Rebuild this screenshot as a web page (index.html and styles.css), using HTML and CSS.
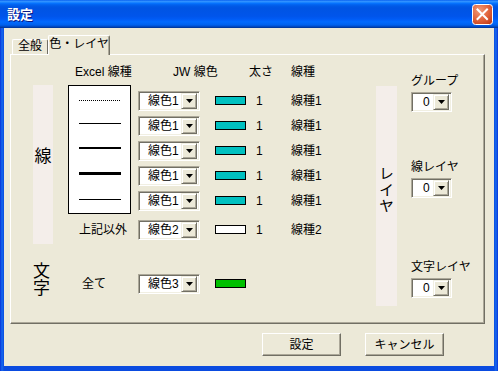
FILE: index.html
```html
<!DOCTYPE html>
<html lang="ja">
<head>
<meta charset="utf-8">
<title>設定</title>
<link rel="stylesheet" href="styles.css">
</head>
<body>
<div class="window">
  <div class="titlebar">
    <span class="title">設定</span>
    <span class="close">
      <svg width="21" height="21" viewBox="0 0 21 21">
        <defs>
          <radialGradient id="cg" cx="35%" cy="30%" r="85%">
            <stop offset="0" stop-color="#F29A78"/>
            <stop offset="0.55" stop-color="#E1643C"/>
            <stop offset="1" stop-color="#BF3A17"/>
          </radialGradient>
        </defs>
        <rect x="0.5" y="0.5" width="20" height="20" rx="3" fill="url(#cg)" stroke="#fff"/>
        <path d="M5.5 5.5L15 15M15 5.5L5.5 15" stroke="#fff" stroke-width="2" stroke-linecap="square"/>
      </svg>
    </span>
  </div>
  <div class="client">
    <div class="tabs">
      <div class="tab">全般</div>
      <div class="tab active">色・レイヤ</div>
    </div>
    <div class="panel">
      <div class="grid">
        <div class="h-excel">Excel 線種</div>
        <div class="h-jw">JW 線色</div>
        <div class="h-thick">太さ</div>
        <div class="h-type">線種</div>

        <div class="band-left"><span class="vtext big">線</span></div>
        <div class="linebox">
          <div class="ln dotted"></div>
          <div class="ln thin l2"></div>
          <div class="ln w2 l3"></div>
          <div class="ln w3 l4"></div>
          <div class="ln thin l5"></div>
        </div>

        <div class="combo c-combo r2"><span class="val">線色1</span><span class="arrow"><svg width="7" height="4" viewBox="0 0 7 4"><polygon points="0,0 7,0 3.5,4" fill="#000"/></svg></span></div>
        <div class="swatch teal r2"></div><div class="c-thick r2">1</div><div class="c-type r2">線種1</div>

        <div class="combo c-combo r3"><span class="val">線色1</span><span class="arrow"><svg width="7" height="4" viewBox="0 0 7 4"><polygon points="0,0 7,0 3.5,4" fill="#000"/></svg></span></div>
        <div class="swatch teal r3"></div><div class="c-thick r3">1</div><div class="c-type r3">線種1</div>

        <div class="combo c-combo r4"><span class="val">線色1</span><span class="arrow"><svg width="7" height="4" viewBox="0 0 7 4"><polygon points="0,0 7,0 3.5,4" fill="#000"/></svg></span></div>
        <div class="swatch teal r4"></div><div class="c-thick r4">1</div><div class="c-type r4">線種1</div>

        <div class="combo c-combo r5"><span class="val">線色1</span><span class="arrow"><svg width="7" height="4" viewBox="0 0 7 4"><polygon points="0,0 7,0 3.5,4" fill="#000"/></svg></span></div>
        <div class="swatch teal r5"></div><div class="c-thick r5">1</div><div class="c-type r5">線種1</div>

        <div class="combo c-combo r6"><span class="val">線色1</span><span class="arrow"><svg width="7" height="4" viewBox="0 0 7 4"><polygon points="0,0 7,0 3.5,4" fill="#000"/></svg></span></div>
        <div class="swatch teal r6"></div><div class="c-thick r6">1</div><div class="c-type r6">線種1</div>

        <div class="c-label lbl-other r8">上記以外</div>
        <div class="combo c-combo r8"><span class="val">線色2</span><span class="arrow"><svg width="7" height="4" viewBox="0 0 7 4"><polygon points="0,0 7,0 3.5,4" fill="#000"/></svg></span></div>
        <div class="swatch white r8"></div><div class="c-thick r8">1</div><div class="c-type r8">線種2</div>

        <div class="moji r10"><span class="vtext big">文字</span></div>
        <div class="c-label lbl-all r10">全て</div>
        <div class="combo c-combo r10"><span class="val">線色3</span><span class="arrow"><svg width="7" height="4" viewBox="0 0 7 4"><polygon points="0,0 7,0 3.5,4" fill="#000"/></svg></span></div>
        <div class="swatch green r10"></div>
      </div>

      <div class="band-right"><span class="vtext mid">レイヤ</span></div>

      <div class="layers">
        <div class="lgroup g1">
          <div class="llabel">グループ</div>
          <div class="combo small"><span class="val">0</span><span class="arrow"><svg width="7" height="4" viewBox="0 0 7 4"><polygon points="0,0 7,0 3.5,4" fill="#000"/></svg></span></div>
        </div>
        <div class="lgroup g2">
          <div class="llabel">線レイヤ</div>
          <div class="combo small"><span class="val">0</span><span class="arrow"><svg width="7" height="4" viewBox="0 0 7 4"><polygon points="0,0 7,0 3.5,4" fill="#000"/></svg></span></div>
        </div>
        <div class="lgroup g3">
          <div class="llabel">文字レイヤ</div>
          <div class="combo small"><span class="val">0</span><span class="arrow"><svg width="7" height="4" viewBox="0 0 7 4"><polygon points="0,0 7,0 3.5,4" fill="#000"/></svg></span></div>
        </div>
      </div>
    </div>
    <div class="buttons">
      <div class="btn">設定</div>
      <div class="btn">キャンセル</div>
    </div>
  </div>
</div>
</body>
</html>
```

FILE: styles.css
```css
* { box-sizing: border-box; }
html, body {
  margin: 0;
  padding: 0;
  width: 498px;
  height: 371px;
  overflow: hidden;
  background: #0A3FD9;
}
body {
  font-family: "Liberation Sans", "Noto Sans CJK JP", sans-serif;
  font-size: 12px;
  line-height: 14px;
  color: #000;
}
.window {
  width: 498px;
  height: 371px;
  display: flex;
  flex-direction: column;
  background: linear-gradient(90deg, #0831D9 0, #166AEE 2px, #0A4BE0 4px, #0A4BE0 494px, #166AEE 496px, #0831D9 498px);
  padding: 0 4px 5px 4px;
}
.titlebar {
  height: 28px;
  margin: 0 -4px;
  padding: 0 5px 0 7px;
  display: flex;
  align-items: center;
  justify-content: space-between;
  background: linear-gradient(#0058EE 0%, #3593FF 4%, #288EFF 7%, #127DFF 10%, #036FFC 13%, #0262EE 17%, #0057E5 24%, #0054E3 30%, #0055EB 58%, #005BF5 68%, #026AFE 78%, #0062EF 88%, #0052D6 93%, #0040AB 97%, #003092 100%);
}
.title {
  color: #fff;
  font-family: "Noto Sans CJK JP", sans-serif;
  font-weight: bold;
  font-size: 13px;
  line-height: 15px;
  text-shadow: 1px 1px 0 #0A1883;
  margin-top: -1px;
}
.close {
  display: block;
  width: 21px;
  height: 21px;
  margin-top: 0;
}
.close svg { display: block; }
.client {
  flex: 1;
  background: #ECE9D8;
  padding: 6px 9px 0 6px;
  display: flex;
  flex-direction: column;
}
.tabs {
  display: flex;
  align-items: flex-end;
  height: 20px;
  padding-left: 2px;
  position: relative;
  z-index: 2;
}
.tab {
  height: 15px;
  width: 36px;
  border-top: 1px solid #fff;
  border-left: 1px solid #fff;
  border-right: 1px solid #716F64;
  border-radius: 2px 2px 0 0;
  text-align: center;
  font-size: 12px;
  line-height: 13px;
  margin-bottom: 0;
}
.tab.active {
  height: 20px;
  width: 62px;
  background: #ECE9D8;
  margin-bottom: -1px;
  line-height: 14px;
  padding-top: 1px;
  box-shadow: inset -1px 0 0 #ACA899;
}
.panel {
  width: 475px;
  height: 270px;
  border-top: 1px solid #fff;
  border-left: 1px solid #fff;
  border-right: 1px solid #716F64;
  border-bottom: 1px solid #716F64;
  box-shadow: inset -1px -1px 0 #ACA899;
  display: flex;
  align-items: flex-start;
  padding: 9px 0 0 22px;
  position: relative;
  z-index: 1;
}
.grid {
  display: grid;
  grid-template-columns: 20px 15px 63px 7px 62px 15px 31px 10px 20px 15px 40px;
  grid-template-rows: 24px repeat(5, 25px) 4px 25px 20px 44px;
  align-items: center;
  justify-items: start;
  white-space: nowrap;
}
.h-excel, .h-jw, .h-thick, .h-type {
  grid-row: 1;
  align-self: start;
  margin-top: 1px;
}
.h-excel { grid-column: 3 / span 3; margin-left: 7px; }
.h-jw { grid-column: 5 / span 3; margin-left: 35px; }
.h-thick { grid-column: 8 / span 2; margin-left: 3px; }
.h-type { grid-column: 11; }

.r2 { grid-row: 2; }
.r3 { grid-row: 3; }
.r4 { grid-row: 4; }
.r5 { grid-row: 5; }
.r6 { grid-row: 6; }
.r8 { grid-row: 8; }
.r10 { grid-row: 10; }

.band-left {
  grid-column: 1;
  grid-row: 2 / 9;
  align-self: stretch;
  justify-self: stretch;
  margin: -3px 0 -2px 0;
  background: #F4EEEA;
  display: flex;
  justify-content: center;
  padding-top: 62px;
}
.vtext {
  writing-mode: vertical-rl;
  font-family: "Noto Sans CJK JP", sans-serif;
}
.vtext.big { font-size: 17px; line-height: 17px; }
.vtext.mid { font-size: 15px; line-height: 15px; letter-spacing: 1px; }
.moji {
  grid-column: 1;
  align-self: start;
  justify-self: start;
}
.linebox {
  grid-column: 3;
  grid-row: 2 / 7;
  align-self: stretch;
  justify-self: stretch;
  margin: -3px 0 -1px 0;
  background: #fff;
  border: 1px solid #000;
  display: flex;
  flex-direction: column;
  padding: 0 9px 0 10px;
}
.ln { height: 1px; background: #000; }
.ln.dotted {
  margin-top: 14px;
  background: repeating-linear-gradient(90deg, #000 0 1px, transparent 1px 2px);
}
.ln.l2 { margin-top: 22px; }
.ln.w2 { height: 2px; }
.ln.l3 { margin-top: 23px; }
.ln.w3 { height: 3px; }
.ln.l4 { margin-top: 23px; }
.ln.l5 { margin-top: 24px; }

.combo {
  width: 62px;
  height: 20px;
  background: #fff;
  border: 1px solid;
  border-color: #ACA899 #fff #fff #ACA899;
  box-shadow: inset 1px 1px 0 #716F64, inset -1px -1px 0 #F1EFE2;
  display: flex;
  align-items: center;
  padding: 1px;
}
.c-combo { grid-column: 5; }
.combo .val {
  flex: 1;
  padding-left: 8px;
  line-height: 14px;
}
.combo .arrow {
  width: 16px;
  height: 16px;
  background: #ECE9D8;
  border: 1px solid;
  border-color: #F1EFE2 #716F64 #716F64 #F1EFE2;
  box-shadow: inset 1px 1px 0 #fff, inset -1px -1px 0 #ACA899;
  display: flex;
  align-items: center;
  justify-content: center;
  margin-right: 1px;
}
.combo .arrow svg { display: block; }
.combo.small { width: 41px; }
.combo.small .val { padding-left: 10px; }

.swatch {
  grid-column: 7;
  width: 31px;
  height: 9px;
  border: 1px solid #000;
  margin-top: -1px;
}
.swatch.teal { background: #00C0C0; }
.swatch.white { background: #fff; }
.swatch.green { background: #00C000; }
.c-thick { grid-column: 9; }
.c-type { grid-column: 11; }
.c-label { grid-column: 3 / span 2; }
.lbl-other { margin-left: 11px; }
.lbl-all { margin-left: 14px; }

.band-right {
  width: 21px;
  height: 220px;
  margin: 22px 0 0 45px;
  background: #F4EEEA;
  display: flex;
  justify-content: center;
  padding-top: 80px;
}
.layers {
  margin-left: 14px;
  display: flex;
  flex-direction: column;
}
.lgroup {
  display: flex;
  flex-direction: column;
  gap: 4px;
}
.g1 { margin-top: 10px; }
.g2 { margin-top: 48px; }
.g3 { margin-top: 62px; }
.llabel { white-space: nowrap; }

.buttons {
  display: flex;
  justify-content: flex-end;
  gap: 24px;
  padding-right: 41px;
  margin-top: 9px;
}
.btn {
  width: 79px;
  height: 23px;
  background: #ECE9D8;
  border: 1px solid;
  border-color: #fff #716F64 #716F64 #fff;
  box-shadow: inset -1px -1px 0 #ACA899;
  display: flex;
  align-items: center;
  justify-content: center;
}
```
